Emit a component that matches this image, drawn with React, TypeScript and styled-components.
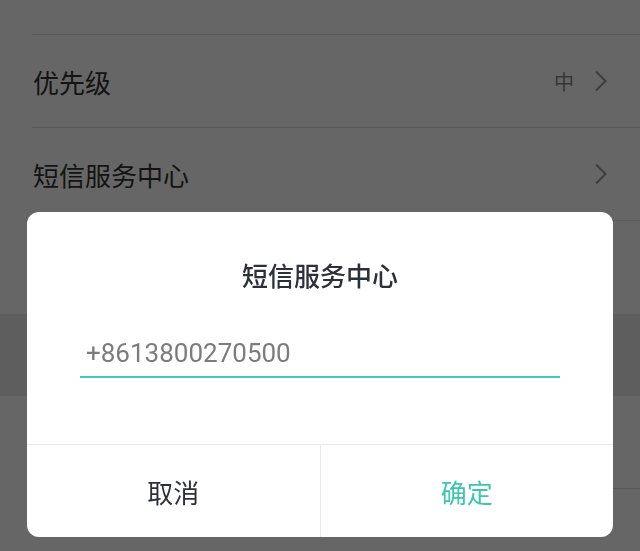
import React from 'react'
import styled, { createGlobalStyle } from 'styled-components'

const GlobalStyle = createGlobalStyle`
  html, body {
    margin: 0;
    padding: 0;
    background: #ffffff;
  }
  body {
    width: 640px;
    height: 551px;
    overflow: hidden;
    font-family: Roboto, "Noto Sans CJK SC", sans-serif;
  }
`

const Page = styled.div`
  width: 640px;
  height: 551px;
  overflow: hidden;
  background: #ffffff;
`

const List = styled.div`
  display: flex;
  flex-direction: column;
  margin-top: -58px;
`

const Group = styled.div`
  display: flex;
  flex-direction: column;
`

const Row = styled.div<{ $divider?: boolean }>`
  height: 93px;
  margin-left: 32px;
  padding: 0 32px 0 1px;
  box-sizing: border-box;
  display: flex;
  align-items: center;
  border-bottom: 1px solid ${({ $divider }) => ($divider ? '#e2e2e2' : 'transparent')};
`

const Label = styled.span`
  flex: 1;
  font-family: "Noto Sans CJK SC", sans-serif;
  font-size: 26px;
  color: #333333;
`

const Value = styled.span`
  font-family: "Noto Sans CJK SC", sans-serif;
  font-size: 20px;
  color: #888888;
  margin-right: 20px;
`

const Chevron = styled.svg`
  width: 14px;
  height: 22px;
  display: block;
`

const Gap = styled.div`
  height: 82px;
  background: #ebebeb;
`

const Overlay = styled.div`
  position: fixed;
  inset: 0;
  background: rgba(0, 0, 0, 0.6);
  display: flex;
  justify-content: center;
  align-items: flex-end;
  padding-bottom: 14px;
  box-sizing: border-box;
`

const Dialog = styled.div`
  width: 586px;
  background: #ffffff;
  border-radius: 12px;
  display: flex;
  flex-direction: column;
  overflow: hidden;
`

const Title = styled.div`
  padding-top: 45px;
  height: 36px;
  line-height: 36px;
  text-align: center;
  font-family: "Noto Sans CJK SC", sans-serif;
  font-size: 26px;
  font-weight: 500;
  color: #2b303a;
`

const Field = styled.input`
  margin: 37px 53px 66px;
  height: 46px;
  padding: 0 0 0 6px;
  border: none;
  border-bottom: 2px solid #45c8b8;
  outline: none;
  background: transparent;
  font-family: Roboto, sans-serif;
  font-size: 26px;
  color: #7c7c7c;
`

const Actions = styled.div`
  display: flex;
  border-top: 1px solid #e9e9e9;
  height: 92px;
`

const ActionButton = styled.button<{ $primary?: boolean }>`
  flex: 1;
  border: none;
  background: transparent;
  padding: 0;
  font-family: "Noto Sans CJK SC", sans-serif;
  font-size: 26px;
  color: ${({ $primary }) => ($primary ? '#3fc4b3' : '#2b303a')};
  & + & {
    border-left: 1px solid #e9e9e9;
  }
`

const ChevronIcon = () => (
  <Chevron viewBox='0 0 14 22'>
    <path d='M2 1.5 L11.5 11 L2 20.5' fill='none' stroke='#9a9a9a' strokeWidth='2' />
  </Chevron>
)

const rows = [
  { label: '', value: '', divider: true },
  { label: '优先级', value: '中', divider: true, arrow: true },
  { label: '短信服务中心', value: '', divider: true, arrow: true },
  { label: '', value: '', divider: false }
]

const App = () => {
  return (
    <Page>
      <GlobalStyle />
      <List>
        <Group>
          {rows.map((row, idx) => (
            <Row key={idx.toString()} $divider={row.divider}>
              <Label>{row.label}</Label>
              {row.value && <Value>{row.value}</Value>}
              {row.arrow && <ChevronIcon />}
            </Row>
          ))}
        </Group>
        <Gap />
        <Group>
          <Row $divider />
          <Row />
        </Group>
      </List>
      <Overlay>
        <Dialog>
          <Title>短信服务中心</Title>
          <Field defaultValue='+8613800270500' readOnly />
          <Actions>
            <ActionButton>取消</ActionButton>
            <ActionButton $primary>确定</ActionButton>
          </Actions>
        </Dialog>
      </Overlay>
    </Page>
  )
}

export default App
